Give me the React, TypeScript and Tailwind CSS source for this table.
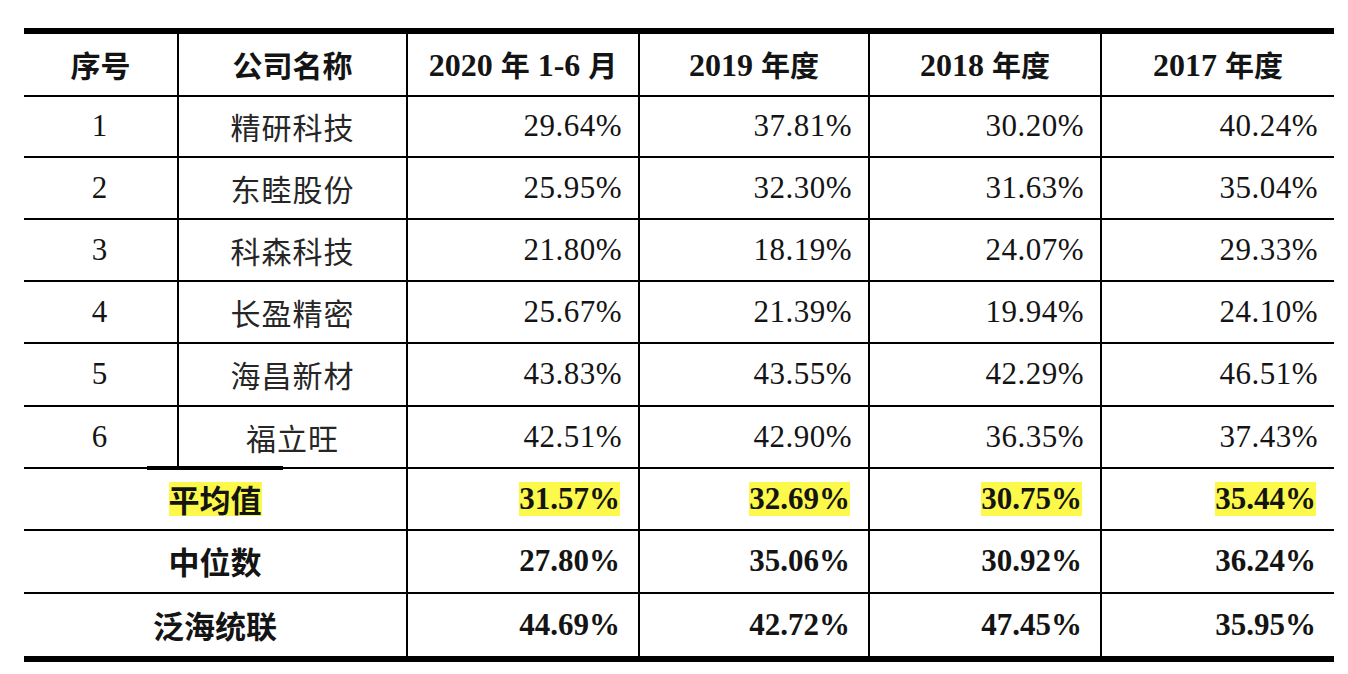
import React from "react";

const serif = { fontFamily: '"Liberation Serif", "Times New Roman", Tinos, "DejaVu Serif", serif' };
const cjk = { fontFamily: '"Noto Sans CJK SC", "Noto Sans", sans-serif' };

type Row = { no: string; name: string; v: string[] };
const rows: Row[] = [
  { no: "1", name: "精研科技", v: ["29.64%", "37.81%", "30.20%", "40.24%"] },
  { no: "2", name: "东睦股份", v: ["25.95%", "32.30%", "31.63%", "35.04%"] },
  { no: "3", name: "科森科技", v: ["21.80%", "18.19%", "24.07%", "29.33%"] },
  { no: "4", name: "长盈精密", v: ["25.67%", "21.39%", "19.94%", "24.10%"] },
  { no: "5", name: "海昌新材", v: ["43.83%", "43.55%", "42.29%", "46.51%"] },
  { no: "6", name: "福立旺", v: ["42.51%", "42.90%", "36.35%", "37.43%"] },
];

const heights = ["h-[61px]", "h-[62px]", "h-[62px]", "h-[62px]", "h-[63px]", "h-[62px]"];

const summary = [
  { name: "平均值", v: ["31.57%", "32.69%", "30.75%", "35.44%"], hl: true, h: "h-[62px]" },
  { name: "中位数", v: ["27.80%", "35.06%", "30.92%", "36.24%"], hl: false, h: "h-[63px]" },
  { name: "泛海统联", v: ["44.69%", "42.72%", "47.45%", "35.95%"], hl: false, h: "h-[62px]" },
];

const valW = ["w-[232px]", "w-[230px]", "w-[232px]", "w-[232px]"];

type Part = [string, boolean];
const headers: Part[][] = [
  [["2020 ", false], ["年", true], [" 1-6 ", false], ["月", true]],
  [["2019 ", false], ["年度", true]],
  [["2018 ", false], ["年度", true]],
  [["2017 ", false], ["年度", true]],
];

export default function App() {
  return (
    <div className="w-[1348px] h-[674px] bg-white overflow-hidden">
      <div className="ml-[24px] mt-[28px] w-[1310px] border-t-[6px] border-b-[6px] border-black text-[#141414]">
        {/* header */}
        <div className="flex h-[63px] border-b-2 border-black font-bold">
          <div className="w-[155px] border-r-2 border-black flex items-center justify-center text-[30px]" style={cjk}>
            序号
          </div>
          <div className="w-[229px] border-r-2 border-black flex items-center justify-center text-[30px]" style={cjk}>
            公司名称
          </div>
          {headers.map((h, i) => (
            <div
              key={i}
              className={`${valW[i]} ${i < 3 ? "border-r-2 border-black" : ""} flex items-center justify-center whitespace-pre`}
            >
              {h.map(([t, isCjk], j) => (
                <span key={j} className={isCjk ? "text-[29px]" : "text-[32px]"} style={isCjk ? cjk : serif}>
                  {t}
                </span>
              ))}
            </div>
          ))}
        </div>
        {rows.map((r, ri) => (
          <div key={r.no} className={`relative flex ${heights[ri]} border-b-2 border-black`}>
            <div className="w-[155px] border-r-2 border-black flex items-center justify-center text-[31px] pr-[2px]" style={serif}>
              {r.no}
            </div>
            <div className="w-[229px] border-r-2 border-black flex items-center justify-center text-[30px] text-[#262626] tracking-[1px]" style={cjk}>
              {r.name}
            </div>
            {r.v.map((v, i) => (
              <div
                key={i}
                className={`${valW[i]} ${i < 3 ? "border-r-2 border-black" : ""} flex items-center justify-end pr-[16px] text-[31px] tracking-[0.5px]`}
                style={serif}
              >
                {v}
              </div>
            ))}
            {ri === 5 && (
              <div className="absolute left-[123px] w-[136px] bottom-[-3px] h-[4px] bg-black" />
            )}
          </div>
        ))}
        {summary.map((s, si) => (
          <div key={s.name} className={`flex ${s.h} ${si < 2 ? "border-b-2 border-black" : ""} font-bold`}>
            <div className="w-[384px] border-r-2 border-black flex items-center justify-center text-[31px]" style={cjk}>
              <span className={s.hl ? "bg-[#fcf94a] leading-[34px]" : ""}>{s.name}</span>
            </div>
            {s.v.map((v, i) => (
              <div
                key={i}
                className={`${valW[i]} ${i < 3 ? "border-r-2 border-black" : ""} flex items-center justify-end pr-[18px] text-[31px]`}
                style={serif}
              >
                <span className={s.hl ? "bg-[#fcf94a] leading-[34px]" : ""}>{v}</span>
              </div>
            ))}
          </div>
        ))}
      </div>
    </div>
  );
}
